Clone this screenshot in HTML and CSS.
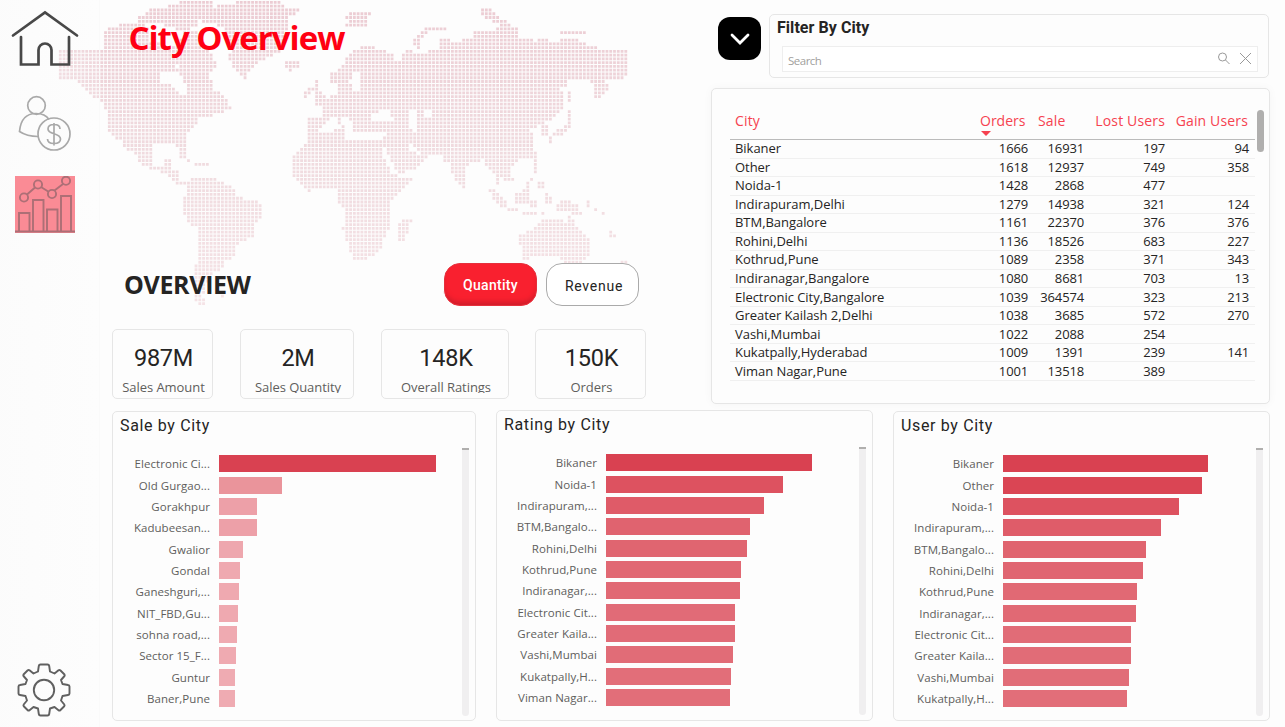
FILE: index.html
```html
<!DOCTYPE html>
<html lang="en">
<head>
<meta charset="utf-8">
<title>City Overview</title>
<link rel="stylesheet" href="styles.css">
</head>
<body>
<svg class="map" width="660" height="310" viewBox="0 0 660 310" aria-hidden="true">
  <defs><linearGradient id="fade" gradientUnits="userSpaceOnUse" x1="0" y1="0" x2="0" y2="310"><stop offset="0" stop-color="#ecccd3"/><stop offset=".5" stop-color="#f0dbdf"/><stop offset="1" stop-color="#f5e3e6"/></linearGradient></defs>
  <path id="dots" fill="url(#fade)"/>
</svg>
<div class="app">
  <nav class="side">
    <svg class="home" width="68" height="58" viewBox="0 0 68 58"><path d="M2 25.500L34 2.500L66 25.500M10 27V54.500H27.500V40a6.500 6.500 0 0 1 13 0V54.500H58V27" fill="none" stroke="#484848" stroke-width="2.700" stroke-linecap="round"/></svg>
    <svg class="people" width="56" height="58" viewBox="0 0 56 58"><g fill="none" stroke="#a9a9a9" stroke-width="1.700"><circle cx="18.500" cy="10.500" r="8.800"/><path d="M20 41.500C13 41.500 6 39.500 1.500 36.500C2.500 25 8 18.500 18 18.500c6 0 10.500 2 13 6"/><circle cx="36" cy="39" r="16"/><path d="M42 34c0-3-2.500-4.500-6-4.500s-6 1.500-6 4.500c0 6 12.500 3.500 12.500 10c0 3-3 4.500-6.500 4.500S29.500 47 29.500 44M36 28v22.500"/></g></svg>
    <svg class="trend" width="60" height="57" viewBox="0 0 60 57"><path fill="#fa8b95" d="M0 0h60v57H0z"/><g fill="none" stroke="#ad6f76" stroke-width="1.900"><path d="M0 55.500h60M4 55V37h10.500v18M18 55V24h10.500v31M32 55V33.500h10.500V55M46 55V20h10v35M12 18.500l8-7M26 11l8 5M39.500 14.500L48 8"/><circle cx="9" cy="21.500" r="4.100"/><circle cx="23" cy="8.500" r="4.100"/><circle cx="37" cy="18" r="4.100"/><circle cx="51" cy="4.800" r="4.100"/></g></svg>
    <svg class="gear" width="56" height="56" viewBox="-28 -28 56 56"><g fill="none" stroke="#606060" stroke-width="1.900" stroke-linejoin="round"><circle r="10.200"/><path d="M-3.500-25.500H3.500Q5-25.500 5.200-24L6-18.500L10.500-16.500L14.500-19.800Q15.500-20.500 16.500-19.500L20.500-15.500Q21-14.800 20.500-14L17-10L18.500-6L24-5Q25.500-4.800 25.500-3.500V3.500Q25.500 4.800 24 5L18.500 6L17 10.500L20.300 14.500Q21 15.500 20 16.500L16.500 20Q15.500 21 14.500 20.200L10.500 17L6 18.500L5.200 24Q5 25.500 3.500 25.500H-3.500Q-5 25.500-5.200 24L-6 18.500L-10.500 17L-14.500 20.200Q-15.500 21-16.500 20L-20 16.500Q-21 15.500-20.300 14.500L-17 10.500L-18.500 6L-24 5Q-25.500 4.800-25.500 3.500V-3.500Q-25.500-4.800-24-5L-18.500-6L-17-10L-20.500-14Q-21-14.800-20.500-15.500L-16.500-19.500Q-15.500-20.500-14.500-19.800L-10.500-16.500L-6-18.500L-5.200-24Q-5-25.500-3.500-25.500Z"/></g></svg>
  </nav>
  <main>
    <div class="upper">
      <section class="intro">
        <h1><span>City Overview</span></h1>
        <div class="subhead">
          <h2><span>OVERVIEW</span></h2>
          <button class="pill on"><span>Quantity</span></button>
          <button class="pill"><span>Revenue</span></button>
        </div>
        <div class="kpis">
          <div class="box kpi k1"><b>987M</b><p>Sales Amount</p></div>
          <div class="box kpi k2"><b>2M</b><p>Sales Quantity</p></div>
          <div class="box kpi k3"><b>148K</b><p>Overall Ratings</p></div>
          <div class="box kpi k4"><b>150K</b><p>Orders</p></div>
        </div>
      </section>
      <section class="data">
        <div class="filter-row">
          <button class="toggle"><svg width="20" height="14" viewBox="0 0 20 14"><path d="M2 3l8 8 8-8" fill="none" stroke="#fff" stroke-width="2.800" stroke-linecap="round"/></svg></button>
          <div class="box filter">
            <h3>Filter By City</h3>
            <div class="search"><span>Search</span>
              <svg width="36" height="14" viewBox="0 0 36 14"><g fill="none" stroke="#999" stroke-width="1"><circle cx="6.500" cy="5" r="4"/><path d="M9.500 8L13.500 12M24 1l11 11M35 1l-11 11"/></g></svg>
            </div>
          </div>
        </div>
        <div class="box table-box">
          <table>
            <thead><tr><th>City</th><th class="sorted">Orders</th><th>Sale</th><th>Lost Users</th><th>Gain Users</th></tr></thead>
            <tbody>
              <tr><td>Bikaner</td><td>1666</td><td>16931</td><td>197</td><td>94</td></tr>
              <tr><td>Other</td><td>1618</td><td>12937</td><td>749</td><td>358</td></tr>
              <tr><td>Noida-1</td><td>1428</td><td>2868</td><td>477</td><td></td></tr>
              <tr><td>Indirapuram,Delhi</td><td>1279</td><td>14938</td><td>321</td><td>124</td></tr>
              <tr><td>BTM,Bangalore</td><td>1161</td><td>22370</td><td>376</td><td>376</td></tr>
              <tr><td>Rohini,Delhi</td><td>1136</td><td>18526</td><td>683</td><td>227</td></tr>
              <tr><td>Kothrud,Pune</td><td>1089</td><td>2358</td><td>371</td><td>343</td></tr>
              <tr><td>Indiranagar,Bangalore</td><td>1080</td><td>8681</td><td>703</td><td>13</td></tr>
              <tr><td>Electronic City,Bangalore</td><td>1039</td><td>364574</td><td>323</td><td>213</td></tr>
              <tr><td>Greater Kailash 2,Delhi</td><td>1038</td><td>3685</td><td>572</td><td>270</td></tr>
              <tr><td>Vashi,Mumbai</td><td>1022</td><td>2088</td><td>254</td><td></td></tr>
              <tr><td>Kukatpally,Hyderabad</td><td>1009</td><td>1391</td><td>239</td><td>141</td></tr>
              <tr><td>Viman Nagar,Pune</td><td>1001</td><td>13518</td><td>389</td><td></td></tr>
            </tbody>
          </table>
          <i class="thumb"></i>
        </div>
      </section>
    </div>
    <div class="charts">
      <section class="box chart c1"><h4>Sale by City</h4><div class="plot"><ul>
        <li><span>Electronic Ci...</span><i style="width:216.500px;background:#d94151"></i></li>
        <li><span>Old Gurgao...</span><i style="width:63px;background:#ea949b"></i></li>
        <li><span>Gorakhpur</span><i style="width:38px;background:#eda0a8"></i></li>
        <li><span>Kadubeesan...</span><i style="width:38px;background:#eda0a8"></i></li>
        <li><span>Gwalior</span><i style="width:24px;background:#eea7ae"></i></li>
        <li><span>Gondal</span><i style="width:21px;background:#efa9b0"></i></li>
        <li><span>Ganeshguri,...</span><i style="width:20px;background:#efa9b0"></i></li>
        <li><span>NIT_FBD,Gu...</span><i style="width:19px;background:#efa9b0"></i></li>
        <li><span>sohna road,...</span><i style="width:18px;background:#efaab1"></i></li>
        <li><span>Sector 15_F...</span><i style="width:17px;background:#efaab1"></i></li>
        <li><span>Guntur</span><i style="width:15.500px;background:#efabb2"></i></li>
        <li><span>Baner,Pune</span><i style="width:15.500px;background:#efabb2"></i></li>
      </ul><div class="rail"></div></div></section>
      <section class="box chart c2"><h4>Rating by City</h4><div class="plot"><ul>
        <li><span>Bikaner</span><i style="width:206.300px;background:#d94151"></i></li>
        <li><span>Noida-1</span><i style="width:177px;background:#dd5260"></i></li>
        <li><span>Indirapuram,...</span><i style="width:158.400px;background:#df5b68"></i></li>
        <li><span>BTM,Bangalo...</span><i style="width:143.700px;background:#e0636f"></i></li>
        <li><span>Rohini,Delhi</span><i style="width:140.700px;background:#e06570"></i></li>
        <li><span>Kothrud,Pune</span><i style="width:135px;background:#e16873"></i></li>
        <li><span>Indiranagar,...</span><i style="width:134px;background:#e16974"></i></li>
        <li><span>Electronic Cit...</span><i style="width:128.700px;background:#e16b77"></i></li>
        <li><span>Greater Kaila...</span><i style="width:128.700px;background:#e16b77"></i></li>
        <li><span>Vashi,Mumbai</span><i style="width:126.500px;background:#e16c77"></i></li>
        <li><span>Kukatpally,H...</span><i style="width:125px;background:#e26e79"></i></li>
        <li><span>Viman Nagar...</span><i style="width:124px;background:#e26e79"></i></li>
      </ul><div class="rail"></div></div></section>
      <section class="box chart c3"><h4>User by City</h4><div class="plot"><ul>
        <li><span>Bikaner</span><i style="width:205px;background:#d94151"></i></li>
        <li><span>Other</span><i style="width:199.300px;background:#da4554"></i></li>
        <li><span>Noida-1</span><i style="width:176px;background:#dd5260"></i></li>
        <li><span>Indirapuram,...</span><i style="width:157.700px;background:#df5c69"></i></li>
        <li><span>BTM,Bangalo...</span><i style="width:142.700px;background:#e0646f"></i></li>
        <li><span>Rohini,Delhi</span><i style="width:140px;background:#e06571"></i></li>
        <li><span>Kothrud,Pune</span><i style="width:134px;background:#e16974"></i></li>
        <li><span>Indiranagar,...</span><i style="width:133px;background:#e16974"></i></li>
        <li><span>Electronic Cit...</span><i style="width:128px;background:#e16c77"></i></li>
        <li><span>Greater Kaila...</span><i style="width:128px;background:#e16c77"></i></li>
        <li><span>Vashi,Mumbai</span><i style="width:125.700px;background:#e16d78"></i></li>
        <li><span>Kukatpally,H...</span><i style="width:124px;background:#e26e79"></i></li>
      </ul><div class="rail"></div></div></section>
    </div>
  </main>
</div>
<script src="map.js"></script>
</body>
</html>
```
FILE: styles.css
```css
* { box-sizing: border-box; margin: 0; padding: 0; }
body { width: 1285px; height: 727px; overflow: hidden; background: #fdfdfd; color: #252423; font-family: "Open Sans", "Noto Sans", sans-serif; }
.map { position: absolute; left: 0; top: 0; z-index: 0; }
.app { position: relative; z-index: 1; display: flex; width: 1285px; height: 727px; }
.side { width: 100px; display: flex; flex-direction: column; align-items: flex-start; padding: 10px 0 9px 10.500px; background: linear-gradient(90deg, rgba(250,250,250,.5), rgba(253,253,253,.1)); border-right: 1px solid #fafafa; }
.people { margin: 27px 0 0 7.500px; }
.trend { margin: 23px 0 0 4.500px; }
.gear { margin: auto 0 0 5.500px; }
main { width: 1185px; padding-left: 12px; }
.box { border: 1px solid #e6e6e6; border-radius: 5px; background: #fdfdfd; }
.upper { display: flex; height: 410px; }
.intro { width: 599px; }
h1 { height: 263px; padding: 14px 0 0 16.500px; font-size: 33px; line-height: 48px; font-weight: 700; color: #ff0012; letter-spacing: -1px; white-space: nowrap; }
.subhead { display: flex; height: 66px; }
h2 { width: 332px; padding-left: 12px; font-size: 25px; line-height: 42px; font-weight: 700; letter-spacing: -.35px; }
.pill { width: 93px; height: 43px; margin-right: 9px; border: 1px solid #aaa; border-radius: 16px; background: #fff; color: #252423; font: 400 14px Roboto, sans-serif; letter-spacing: .75px; padding: 3px 0 0 3px; }
.pill.on { font-weight: 500; background: #f9202f; border-color: #e5303c; color: #fff; letter-spacing: .3px; box-shadow: inset 0 -5px 5px -2px #ce1d2a; padding: 1px 0 0 0; }
.kpis { display: flex; }
.kpi { height: 70px; text-align: center; overflow: hidden; padding: 11px 0 0 2px; }
.kpi b { display: block; font: 400 23.500px/34px Roboto, sans-serif; letter-spacing: -.25px; }
.kpi p { height: 18px; line-height: 24px; font-size: 13px; color: #605e5c; overflow: hidden; letter-spacing: -.05px; white-space: nowrap; }
.k1 { width: 101px; margin-right: 27px; }
.k2 { width: 114px; margin-right: 27px; }
.k3 { width: 128px; margin-right: 26px; }
.k4 { width: 111px; }
.data { width: 559px; padding-top: 14px; }
.filter-row { display: flex; height: 74px; padding-left: 7px; }
.toggle { width: 43px; height: 43px; margin: 3px 8px 0 0; border: 0; border-radius: 12px; background: #000; display: flex; align-items: center; justify-content: center; }
.filter { width: 500px; height: 64px; padding: 0 10px 0 7px; }
h3 { font: 700 16px/26px Roboto, sans-serif; letter-spacing: .05px; }
.search { display: flex; align-items: center; justify-content: space-between; height: 26px; margin: 5px 0 0 5px; padding: 0 5px 0 5px; border: 1px solid #eee; background: #fff; font-size: 11.500px; color: #a19f9d; letter-spacing: -.5px; }
.search span { padding-top: 2px; }
.table-box { display: flex; height: 316px; padding: 20px 5px 0 18px; box-shadow: 0 0 10px rgba(0,0,0,.035); }
table { width: 525px; height: 272px; border-collapse: collapse; table-layout: fixed; font-size: 13px; }
tr { height: 18.500px; border-bottom: 1px solid #f0f0f0; }
thead tr { height: 30.500px; border-bottom-color: #bbb; }
th { position: relative; padding: 0 7px 6px 5px; line-height: 24px; text-align: left; font-size: 14px; font-weight: 400; color: #f64250; white-space: nowrap; letter-spacing: .15px; }
th:nth-child(1) { width: 242px; } th:nth-child(2) { width: 57px; } th:nth-child(3) { width: 56px; } th:nth-child(4) { width: 81px; }
th:nth-child(n+4) { text-align: right; }
th:nth-child(n+4), th:nth-child(2) { padding-right: 1px; }
th:nth-child(2) { padding-left: 8px; letter-spacing: 0; }
th:nth-child(3) { padding-left: 9px; }
th:last-child { padding-right: 7px; }
.sorted::after { content: ""; position: absolute; left: 9px; bottom: 3px; border: 5px solid transparent; border-top-color: #f64250; border-bottom: 0; }
td { height: 18.500px; line-height: 17px; text-align: right; padding: 0 1px 0 0; letter-spacing: -.15px; white-space: nowrap; }
td:first-child { text-align: left; padding-left: 5px; letter-spacing: -.04px; }
td:last-child { padding-right: 6px; }
.thumb { width: 7px; height: 42px; margin: 1px 0 0 2px; border-radius: 4px; background: #b0afae; }
.charts { display: flex; }
.chart { height: 311px; padding: 0 6px 0 7px; }
.c1 { width: 364px; height: 310px; margin: 1px 20px 0 0; }
.c2 { width: 377px; margin-right: 20px; }
.c3 { width: 377px; height: 310px; margin-top: 1px; }
h4 { height: 36px; font: 400 16px/27px Roboto, sans-serif; letter-spacing: .65px; }
.plot { display: flex; justify-content: space-between; }
ul { list-style: none; padding-top: 5px; }
li { display: flex; align-items: center; height: 21.360px; }
li span { width: 93px; margin-right: 9px; text-align: right; font-size: 11.500px; line-height: 17px; color: #605e5c; white-space: nowrap; letter-spacing: .05px; }
.c1 li span { width: 90px; }
li i { height: 17px; }
.rail { width: 7px; height: 268px; border-top: 2px solid #b0afae; background: #f0eff0; border-radius: 0 0 4px 4px; }
```
FILE: map.js
```js
// Outlines of land areas, then of water cut back out of them, as x,y pairs.
const land = [
  [58,49,79,49,79,51,88,49,178,50,184,52,216,60,216,69,210,71,212,90,221,92,231,108,218,114,200,118,196,126,186,133,185,143,186,157,179,157,177,145,152,145,152,164,162,168,164,160,171,160,171,168,178,172,178,181,190,181,190,184,176,184,168,175,160,171,150,168,141,164,137,157,133,150,128,150,120,141,109,131,109,115,102,102,90,96,82,87,75,79,58,78],
  [137,18,153,8,170,6,183,0,212,0,212,8,203,14,197,25,186,32,170,27,157,22,137,22],
  [107,28,125,23,147,25,150,43,180,45,182,28,195,30,213,58,213,63,205,64,195,60,190,52,103,50,103,40],
  [200,15,220,5,243,1,280,1,287,7,302,8,301,12,293,15,287,20,286,43,280,53,267,58,250,68,247,78,243,79,236,72,228,58,231,50,225,30,213,23,200,23],
  [281,60,299,60,299,68,290,71],[340,16,357,12,370,12,366,26,345,26,350,20],
  [315,79,320,85,319,88,327,97,328,106,313,107,316,100,312,90],[303,92,310,86,310,94,303,102],
  [190,177,215,177,220,182,230,185,235,190,235,196,247,200,253,200,262,204,262,217,253,228,253,237,245,241,238,242,237,252,230,259,223,260,223,267,215,273,208,280,203,295,208,305,198,305,193,297,194,265,198,262,198,227,190,225,183,210,183,197,187,192,187,183],
  [176,154,184,154,194,162,192,164,176,156],[194,162,209,162,209,166,194,166],[219,294,224,294,224,298,219,298],
  [345,60,357,48,370,46,380,50,393,53,393,59,400,59,401,53,411,50,412,54,425,52,438,50,441,38,448,38,450,42,460,42,461,38,471,37,476,31,495,31,495,27,520,27,520,33,516,37,532,38,532,41,547,38,547,45,566,38,583,41,585,45,598,45,600,50,626,50,626,75,622,79,604,79,607,82,607,90,598,98,593,101,592,83,591,79,570,79,567,85,560,90,565,93,565,107,557,115,543,125,529,128,532,135,535,157,528,160,517,157,516,165,511,167,513,180,503,180,499,176,499,186,495,186,495,173,487,167,484,160,470,163,465,172,464,188,461,188,452,174,450,165,442,160,442,154,427,154,425,162,412,170,396,174,398,178,411,178,411,182,402,192,392,202,392,225,386,232,382,246,370,258,357,262,352,260,350,252,345,238,342,228,345,222,344,208,338,203,338,193,333,187,308,191,302,187,292,175,292,158,300,148,308,142,307,117,322,117,321,109,321,104,315,109,314,102,326,98,338,92,338,82,330,82,330,74,338,72],
  [397,227,404,219,411,219,411,224,407,236,402,244,397,240],
  [412,44,417,34,428,27,445,27,445,30,429,32,422,38,422,49,417,49],[480,12,483,8,491,8,495,15,502,18,509,24,509,28,495,23,484,18],[559,31,585,31,585,34,559,34],
  [567,91,573,91,573,120,568,130,562,136,553,138,550,143,547,140,552,132,566,126,566,113,570,108],[540,125,547,125,547,135,540,135],[531,124,536,124,536,130,531,130],
  [532,153,536,153,538,176,533,174],[529,177,535,177,535,181,529,181],[536,181,543,181,543,188,538,188],
  [487,189,495,190,506,202,506,207,499,207],[506,208,517,208,517,211,506,211],[514,193,522,192,527,181,529,185,528,203,514,203],[529,201,536,201,536,207,529,207],[543,192,548,192,548,203,543,203],[550,197,554,197,554,203,550,203],
  [521,211,536,211,536,215,521,215],[540,211,544,211,544,215,540,215],[555,203,566,200,577,204,581,212,584,218,570,213,555,210],[585,200,589,200,589,207,585,207],[593,207,597,207,597,211,593,211],[600,211,604,211,604,215,600,215],
  [517,238,522,233,530,230,537,225,546,218,562,218,565,224,567,215,573,218,577,228,588,237,591,247,587,260,583,263,563,263,558,257,540,257,521,260,521,247],
  [607,229,612,229,616,237,611,237],[622,259,627,259,627,263,622,263],[442,290,446,290,446,294,442,294]
];
const water = [
  [160,72,177,73,186,83,186,95,176,92,170,82,160,82],[123,16,135,16,140,21,123,21],[177,66,179,66,179,69,177,69],
  [348,92,354,86,349,80,354,73,360,73,360,90],[333,92,337,82,338,96],
  [370,116,378,112,388,110,394,121,370,121],[408,110,416,110,416,134,408,126],[423,110,431,110,431,117,423,117],
  [317,132,329,118,338,118,340,130,320,132],[344,131,345,139,383,139,386,132,352,131,354,124,346,118,342,118],
  [382,147,385,147,397,174,392,173,382,155],[409,145,412,145,425,156,421,157,410,150]
];
function inside(poly, x, y) {
  let hit = false;
  for (let i = 0, j = poly.length - 2; i < poly.length; j = i, i += 2) {
    const xi = poly[i], yi = poly[i + 1], xj = poly[j], yj = poly[j + 1];
    if ((yi > y) !== (yj > y) && x < (xj - xi) * (y - yi) / (yj - yi) + xi) hit = !hit;
  }
  return hit;
}
let d = "";
for (let row = 0; row < 81; row++) {
  for (let col = 0; col < 151; col++) {
    const x = 60.300 + col * 3.770, y = 2.450 + row * 3.765;
    if (land.some(p => inside(p, x, y)) && !water.some(p => inside(p, x, y))) {
      d += `M${(x - 1.400).toFixed(2)} ${(y - 1.400).toFixed(2)}h2.800v2.800h-2.800z`;
    }
  }
}
document.getElementById("dots").setAttribute("d", d);
```
